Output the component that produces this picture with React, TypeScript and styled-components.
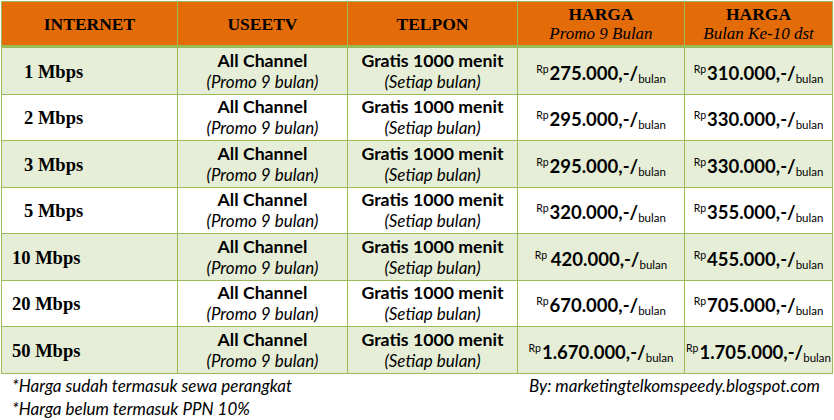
import styled, { createGlobalStyle } from 'styled-components';

const GlobalStyle = createGlobalStyle`
  *, *::before, *::after {
    box-sizing: border-box;
  }
  html, body {
    margin: 0;
    padding: 0;
    background: #ffffff;
  }
  body {
    font-family: Lato, 'Liberation Sans', sans-serif;
    color: #000;
  }
`;

const GREEN = '#9bbb59';
const ORANGE = '#e36c09';
const LIGHT = '#e6eed7';
const COLS = '175px 170px 170px 167px 148px';

const Page = styled.div`
  width: 834px;
  height: 420px;
  padding: 1px 0 0 1px;
  overflow: hidden;
`;

const Table = styled.div`
  width: 832px;
  border: 1px solid ${GREEN};
`;

const HeaderRow = styled.div`
  display: grid;
  grid-template-columns: ${COLS};
  height: 46px;
  background: ${ORANGE};
  border-bottom: 3px solid ${GREEN};
`;

const Row = styled.div<{ $shaded: boolean; $last: boolean }>`
  display: grid;
  grid-template-columns: ${COLS};
  height: ${(p) => (p.$last ? '45.5px' : '46.5px')};
  background: ${(p) => (p.$shaded ? LIGHT : '#ffffff')};
  border-bottom: ${(p) => (p.$last ? 'none' : `1px solid ${GREEN}`)};
`;

const Cell = styled.div<{ $first?: boolean }>`
  display: flex;
  flex-direction: column;
  align-items: center;
  justify-content: center;
  border-left: ${(p) => (p.$first ? 'none' : `1px solid ${GREEN}`)};
  min-width: 0;
`;

const HeadTitle = styled.div`
  font-family: 'Liberation Serif', 'DejaVu Serif', serif;
  font-weight: 700;
  font-size: 17.5px;
  line-height: 20px;
`;

const HeadSub = styled.div`
  font-family: 'Liberation Serif', 'DejaVu Serif', serif;
  font-style: italic;
  font-size: 17px;
  line-height: 20px;
`;

const SpeedCell = styled.div<{ $indent: number }>`
  display: flex;
  align-items: center;
  padding: 3px 0 0 ${(p) => p.$indent}px;
  font-family: 'Liberation Serif', 'DejaVu Serif', serif;
  font-weight: 700;
  font-size: 18.5px;
`;

const MainText = styled.div`
  font-weight: 700;
  font-size: 17.7px;
  line-height: 20px;
  padding-top: 1px;
`;

const SubText = styled.div`
  font-style: italic;
  font-size: 17px;
  line-height: 21px;
`;

const Price = styled.div`
  padding-top: 5px;
  white-space: nowrap;
  font-size: 18.5px;
  font-weight: 700;
`;

const Rp = styled.sup`
  font-size: 10.5px;
  font-weight: 400;
  vertical-align: 7px;
  margin-right: 1px;
`;

const Bulan = styled.sub`
  font-size: 11.5px;
  font-weight: 400;
  vertical-align: -3px;
`;

const Footer = styled.div`
  display: flex;
  justify-content: space-between;
  padding: 0 14px 0 11px;
  font-style: italic;
  font-size: 17px;
  line-height: 23px;
`;

const Note = styled.div`
  white-space: nowrap;
`;

type Plan = {
  speed: string;
  promo: string;
  normal: string;
  gap?: boolean;
};

const plans: Plan[] = [
  { speed: '1 Mbps', promo: '275.000', normal: '310.000' },
  { speed: '2 Mbps', promo: '295.000', normal: '330.000' },
  { speed: '3 Mbps', promo: '295.000', normal: '330.000' },
  { speed: '5 Mbps', promo: '320.000', normal: '355.000' },
  { speed: '10 Mbps', promo: '420.000', normal: '455.000', gap: true },
  { speed: '20 Mbps', promo: '670.000', normal: '705.000' },
  { speed: '50 Mbps', promo: '1.670.000', normal: '1.705.000' },
];

const PriceTag = ({ value, gap }: { value: string; gap?: boolean }) => (
  <Price>
    <Rp>{gap ? 'Rp ' : 'Rp'}</Rp>
    {value},-/<Bulan>bulan</Bulan>
  </Price>
);

const App = () => {
  return (
    <Page>
      <GlobalStyle />
      <Table>
        <HeaderRow>
          <Cell $first>
            <HeadTitle>INTERNET</HeadTitle>
          </Cell>
          <Cell>
            <HeadTitle>USEETV</HeadTitle>
          </Cell>
          <Cell>
            <HeadTitle>TELPON</HeadTitle>
          </Cell>
          <Cell>
            <HeadTitle>HARGA</HeadTitle>
            <HeadSub>Promo 9 Bulan</HeadSub>
          </Cell>
          <Cell>
            <HeadTitle>HARGA</HeadTitle>
            <HeadSub>Bulan Ke-10 dst</HeadSub>
          </Cell>
        </HeaderRow>
        {plans.map((p, i) => (
          <Row key={p.speed} $shaded={i % 2 === 0} $last={i === plans.length - 1}>
            <SpeedCell $indent={p.speed.length > 6 ? 10 : 22}>{p.speed}</SpeedCell>
            <Cell>
              <MainText>All Channel</MainText>
              <SubText>(Promo 9 bulan)</SubText>
            </Cell>
            <Cell>
              <MainText>Gratis 1000 menit</MainText>
              <SubText>(Setiap bulan)</SubText>
            </Cell>
            <Cell>
              <PriceTag value={p.promo} gap={p.gap} />
            </Cell>
            <Cell>
              <PriceTag value={p.normal} />
            </Cell>
          </Row>
        ))}
      </Table>
      <Footer>
        <div>
          <Note>*Harga sudah termasuk sewa perangkat</Note>
          <Note>*Harga belum termasuk PPN 10%</Note>
        </div>
        <Note>By: marketingtelkomspeedy.blogspot.com</Note>
      </Footer>
    </Page>
  );
};

export default App;
